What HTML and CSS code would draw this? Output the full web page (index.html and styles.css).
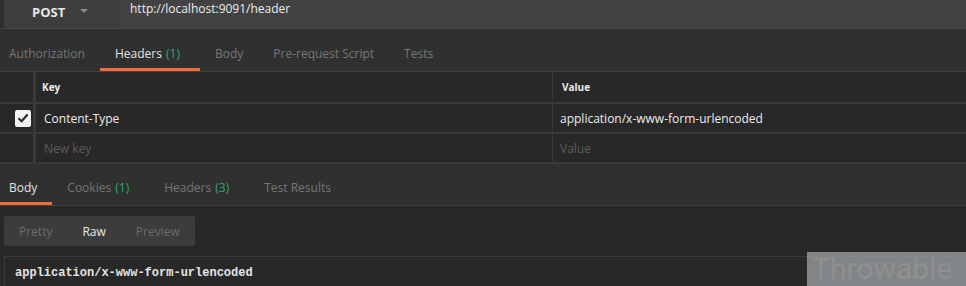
FILE: index.html
```html
<!DOCTYPE html>
<html lang="en">
<head>
    <meta charset="UTF-8">
    <meta name="viewport" content="width=device-width, initial-scale=1.0">
    <title>Request - Headers</title>
    <link rel="stylesheet" href="styles.css">
</head>
<body>
    <div class="app">
        <!-- Method + URL -->
        <div class="url-bar">
            <div class="method">
                <span class="method-name">POST</span>
                <span class="caret"></span>
            </div>
            <div class="url">http://localhost:9091/header</div>
        </div>

        <!-- Request tabs -->
        <div class="tabs request-tabs">
            <div class="tab">Authorization</div>
            <div class="tab active has-count">Headers <span class="count">(1)</span></div>
            <div class="tab">Body</div>
            <div class="tab">Pre-request Script</div>
            <div class="tab">Tests</div>
        </div>

        <!-- Headers table -->
        <div class="kv-table">
            <div class="kv-row head">
                <div class="cell check"></div>
                <div class="cell key">Key</div>
                <div class="cell value">Value</div>
            </div>
            <div class="kv-row">
                <div class="cell check">
                    <span class="checkbox">
                        <svg width="12" height="10" viewBox="0 0 12 10">
                            <path d="M1.5 5.2 L4.6 8.2 L10.6 1.6" fill="none" stroke="#2a2a2a" stroke-width="2.2"/>
                        </svg>
                    </span>
                </div>
                <div class="cell key">Content-Type</div>
                <div class="cell value">application/x-www-form-urlencoded</div>
            </div>
            <div class="kv-row">
                <div class="cell check"></div>
                <div class="cell key placeholder">New key</div>
                <div class="cell value placeholder">Value</div>
            </div>
        </div>

        <!-- Response -->
        <div class="tabs response-tabs">
            <div class="tab active">Body</div>
            <div class="tab has-count">Cookies <span class="count">(1)</span></div>
            <div class="tab has-count">Headers <span class="count">(3)</span></div>
            <div class="tab">Test Results</div>
        </div>

        <div class="response-body">
            <div class="view-toggle">
                <span class="view">Pretty</span>
                <span class="view active">Raw</span>
                <span class="view">Preview</span>
            </div>
            <div class="editor">application/x-www-form-urlencoded</div>
        </div>
    </div>

    <div class="watermark">Throwable</div>
</body>
</html>
```

FILE: styles.css
```css
body, html {
    margin: 0;
    padding: 0;
    width: 100%;
    height: 100%;
    background-color: #282828;
    font-family: 'Open Sans', 'Liberation Sans', sans-serif;
    font-size: 12px;
    overflow: hidden;
}

.app {
    display: flex;
    flex-direction: column;
}

/* Method + URL bar */
.url-bar {
    display: flex;
    height: 28px;
    padding-left: 4px;
    background-color: #2e2e2e;
    border-bottom: 1px solid #464646;
}

.method {
    width: 115px;
    display: flex;
    align-items: center;
    padding-left: 28px;
    box-sizing: border-box;
    background-color: #3d3d3d;
    border-right: 1px solid #393939;
    border-radius: 0 0 0 3px;
}

.method-name {
    color: #e6e6e6;
    font-size: 13px;
    font-weight: bold;
    padding-bottom: 5px;
}

.caret {
    width: 0;
    height: 0;
    margin-left: 15px;
    margin-bottom: 6px;
    border-left: 4px solid transparent;
    border-right: 4px solid transparent;
    border-top: 4px solid #8a8a8a;
}

.url {
    flex-grow: 1;
    background-color: #424242;
    color: #ececec;
    padding-left: 11px;
    line-height: 18px;
}

/* Tabs */
.tabs {
    display: flex;
    align-items: flex-end;
    background-color: #303030;
    border-bottom: 1px solid #414141;
}

.request-tabs {
    height: 42px;
}

.request-tabs .tab {
    padding-bottom: 6px;
}

.response-tabs {
    height: 41px;
}

.response-tabs .tab {
    padding-bottom: 6px;
}

.tab {
    padding: 0 15px 9px;
    color: #767676;
    border-bottom: 3px solid transparent;
    white-space: nowrap;
}

.tab:first-child {
    padding-left: 9px;
}

.tab.has-count {
    padding-right: 20px;
}

.tab.active {
    color: #e4e4e4;
    border-bottom-color: #f26b3a;
}

.count {
    color: #2aa87a;
    margin-left: 1px;
}

/* Key / value table */
.kv-table {
    display: flex;
    flex-direction: column;
}

.kv-row {
    display: grid;
    grid-template-columns: 33px 519px 1fr;
    height: 28px;
    border-bottom: 2px solid #393939;
    background-color: #282828;
}

.kv-row.head {
    height: 30px;
}

.cell {
    display: flex;
    align-items: center;
    color: #ececec;
    border-left: 2px solid #393939;
    padding-left: 7px;
}

.cell.check {
    border-left: none;
    padding-left: 0;
    justify-content: flex-end;
    padding-right: 2px;
}

.cell.key {
    border-left-width: 3px;
}

.cell.value {
    border-left-width: 1px;
}

.kv-row.head .cell {
    font-size: 10px;
    font-weight: bold;
    padding-left: 6px;
}

.kv-row.head .cell.value {
    padding-left: 9px;
}

.kv-row:not(.head) .key {
    padding-left: 8px;
}

.placeholder {
    color: #5c5c5c;
}

.checkbox {
    width: 16px;
    height: 17px;
    background-color: #f4f4f4;
    border-radius: 2px;
    display: flex;
    align-items: center;
    justify-content: center;
}

/* Response body */
.response-body {
    padding: 10px 0 0 4px;
}

.view-toggle {
    display: flex;
    width: 191px;
    height: 30px;
    align-items: center;
    background-color: #3c3c3c;
    border-radius: 3px;
    padding-left: 15px;
    box-sizing: border-box;
    gap: 30px;
}

.view {
    color: #6a6a6a;
}

.view.active {
    color: #e8e8e8;
}

.editor {
    margin-top: 10px;
    border-top: 1px solid #3b3b3b;
    border-left: 1px solid #3b3b3b;
    padding: 9px 0 0 10px;
    height: 30px;
    color: #e4e4e4;
    font-family: 'Liberation Mono', 'Courier New', monospace;
    font-size: 12px;
    font-weight: bold;
}

/* Watermark */
.watermark {
    position: absolute;
    left: 807px;
    top: 252px;
    width: 159px;
    height: 34px;
    background-color: rgba(150, 154, 157, 0.82);
    color: #8f8f8f;
    font-family: Roboto, sans-serif;
    font-size: 30px;
    line-height: 34px;
    padding-left: 5px;
    box-sizing: border-box;
    white-space: nowrap;
}
```
